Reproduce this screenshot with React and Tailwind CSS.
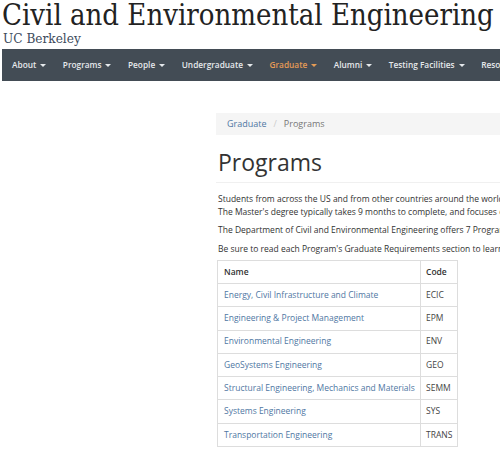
const NAV = ['About', 'Programs', 'People', 'Undergraduate', 'Graduate', 'Alumni', 'Testing Facilities', 'Resources']

const PROGRAMS = [
  ['Energy, Civil Infrastructure and Climate', 'ECIC'],
  ['Engineering & Project Management', 'EPM'],
  ['Environmental Engineering', 'ENV'],
  ['GeoSystems Engineering', 'GEO'],
  ['Structural Engineering, Mechanics and Materials', 'SEMM'],
  ['Systems Engineering', 'SYS'],
  ['Transportation Engineering', 'TRANS'],
]

function Caret() {
  return <span className="ml-[4px] inline-block w-0 h-0 border-x-[3px] border-x-transparent border-t-[3px] border-t-current align-middle" />
}

export default function App() {
  return (
    <div className="w-[500px] h-[455px] overflow-hidden bg-white font-['Open_Sans',sans-serif]">
      {/* Header */}
      <div className="pl-[2px] font-['DejaVu_Serif_Condensed','DejaVu_Serif',serif] whitespace-nowrap">
        <div className="text-[29px] leading-[31px] text-[#222]">Civil and Environmental Engineering</div>
        <div className="text-[13.5px] leading-[15px] text-[#3d4b5c] pl-[1px]">UC Berkeley</div>
      </div>

      {/* Nav */}
      <div className="mt-[3px] ml-[2px] h-[32px] bg-[#434c55] flex items-center whitespace-nowrap text-[8.3px] font-semibold text-[#e6e9ec]">
        {NAV.map((item, i) => (
          <div key={item} className={`flex items-center ${i === 0 ? 'pl-[10px]' : 'pl-[16.5px]'} ${item === 'Graduate' ? 'text-[#e59b55]' : ''}`}>
            {item}
            {i < NAV.length - 1 && <Caret />}
          </div>
        ))}
      </div>

      {/* Content */}
      <div className="ml-[216px] mt-[32px] w-[400px]">
        <div className="h-[22px] bg-[#f5f5f5] flex items-center pl-[11px] text-[9px] whitespace-nowrap">
          <span className="text-[#4f77a3]">Graduate</span>
          <span className="text-[#ccc] px-[7px]">/</span>
          <span className="text-[#777]">Programs</span>
        </div>

        <div className="pl-[2px] mt-[12px] pb-[5px] border-b border-[#f0f0f0]">
          <h1 className="text-[23px] leading-[30px] text-[#333]">Programs</h1>
        </div>

        <div className="pl-[2px] mt-[9px] text-[8.5px] leading-[13px] text-[#333] whitespace-nowrap">
          <p>Students from across the US and from other countries around the world come to study in our graduate programs.</p>
          <p>The Master's degree typically takes 9 months to complete, and focuses on coursework.</p>
          <p className="mt-[5px]">The Department of Civil and Environmental Engineering offers 7 Programs of study.</p>
          <p className="mt-[6px]">Be sure to read each Program's Graduate Requirements section to learn more.</p>
        </div>

        <table className="mt-[5px] ml-[1px] border-collapse border border-[#ddd] text-[8.5px] whitespace-nowrap">
          <thead>
            <tr className="h-[23px]">
              <th className="border border-[#ddd] text-left font-semibold text-[#333] pl-[6px] w-[203px]">Name</th>
              <th className="border border-[#ddd] text-left font-semibold text-[#333] pl-[5px] w-[37px]">Code</th>
            </tr>
          </thead>
          <tbody>
            {PROGRAMS.map(([name, code]) => (
              <tr key={code} className="h-[23.3px]">
                <td className="border border-[#ddd] pl-[6px] text-[#4f77a3]">{name}</td>
                <td className="border border-[#ddd] pl-[5px] text-[#444]">{code}</td>
              </tr>
            ))}
          </tbody>
        </table>
      </div>
    </div>
  )
}
